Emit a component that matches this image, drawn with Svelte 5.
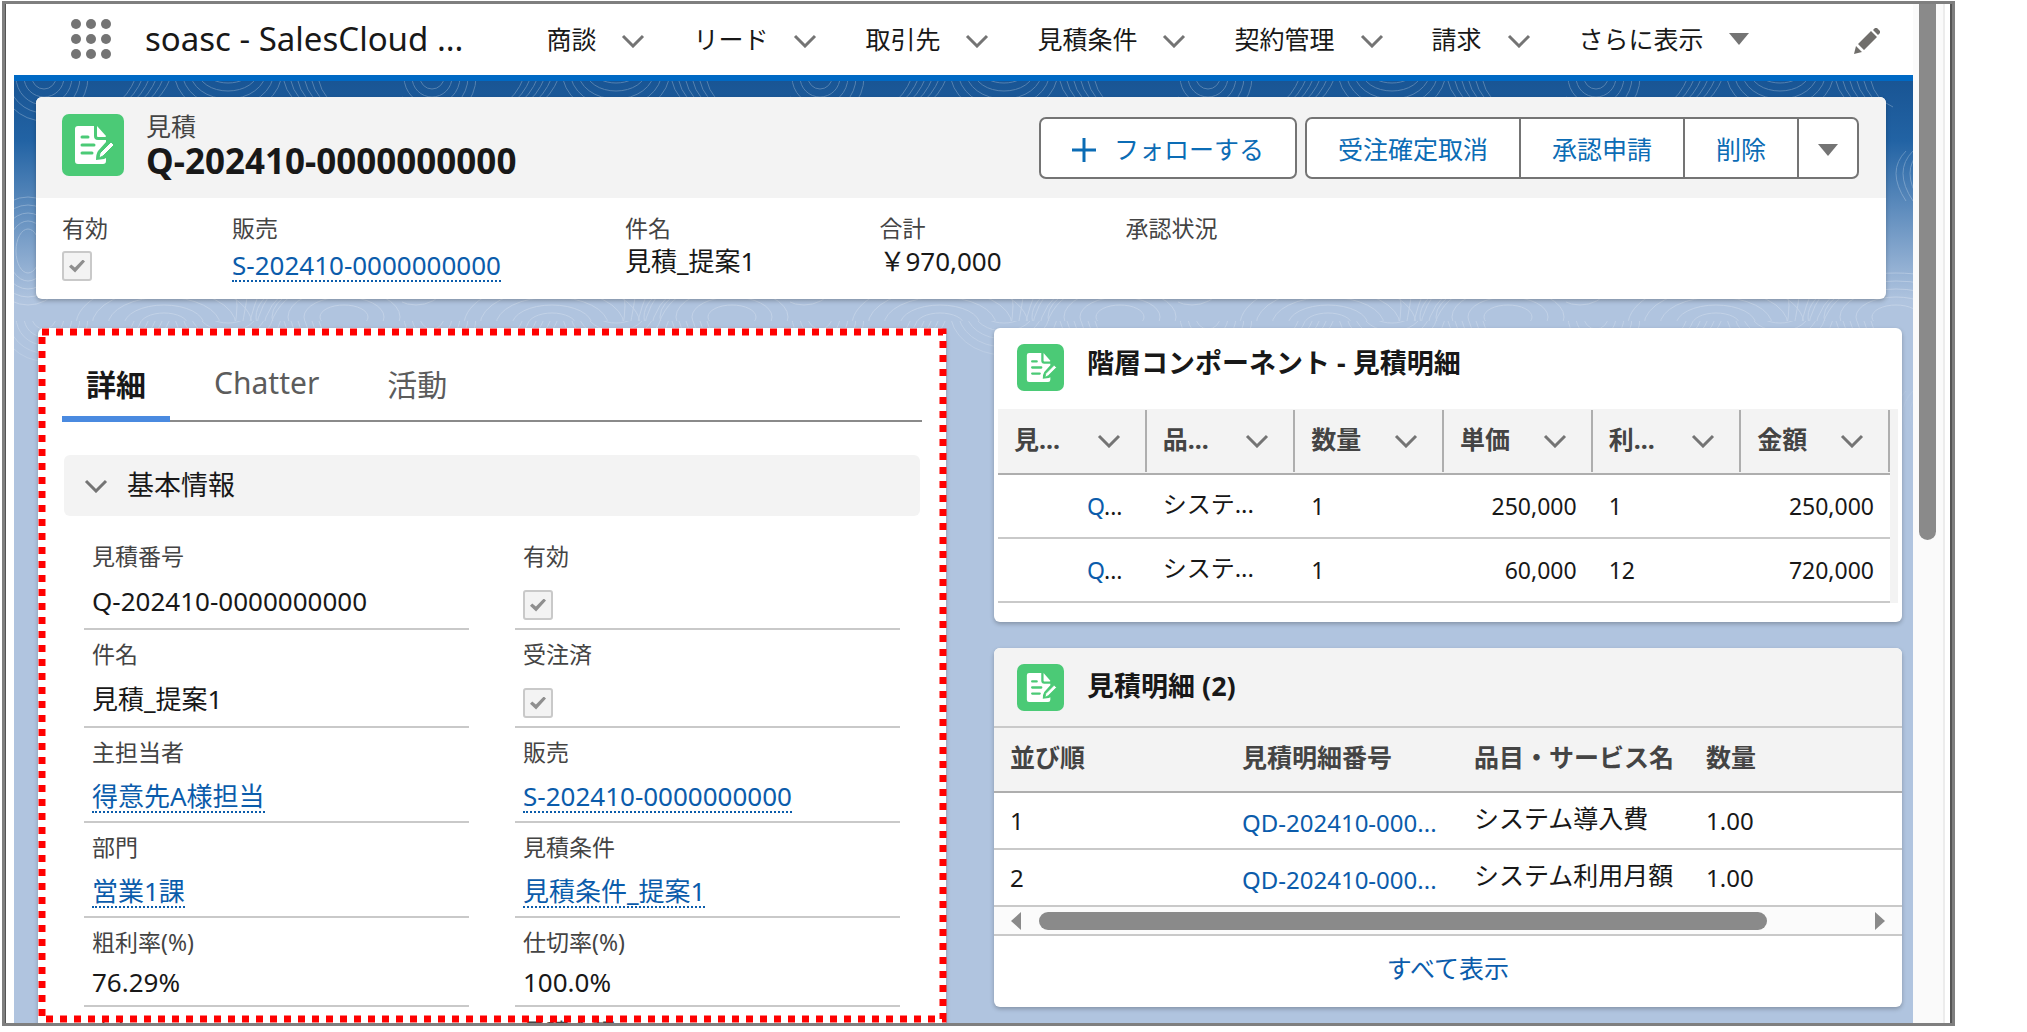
<script lang="ts">
	const navItems = ['商談', 'リード', '取引先', '見積条件', '契約管理', '請求'];
	const actions = ['受注確定取消', '承認申請', '削除'];
	const tabs = [
		{ label: '詳細', isActive: true },
		{ label: 'Chatter', isActive: false },
		{ label: '活動', isActive: false }
	];

	const highlights = [
		{ label: '有効', type: 'check' },
		{ label: '販売', type: 'link', value: 'S-202410-0000000000' },
		{ label: '件名', type: 'text', value: '見積_提案1' },
		{ label: '合計', type: 'text', value: '\uFFE5970,000' },
		{ label: '承認状況', type: 'text', value: '' }
	];

	const fields = [
		{ label: '見積番号', type: 'text', value: 'Q-202410-0000000000' },
		{ label: '有効', type: 'check' },
		{ label: '件名', type: 'text', value: '見積_提案1' },
		{ label: '受注済', type: 'check' },
		{ label: '主担当者', type: 'link', value: '得意先A様担当' },
		{ label: '販売', type: 'link', value: 'S-202410-0000000000' },
		{ label: '部門', type: 'link', value: '営業1課' },
		{ label: '見積条件', type: 'link', value: '見積条件_提案1' },
		{ label: '粗利率(%)', type: 'text', value: '76.29%' },
		{ label: '仕切率(%)', type: 'text', value: '100.0%' },
		{ label: '定価', type: 'text', value: '' },
		{ label: '見積金額', type: 'text', value: '' }
	];

	const treeColumns = ['見...', '品...', '数量', '単価', '利...', '金額'];
	const treeRows = [
		{ name: 'システ...', qty: '1', price: '250,000', months: '1', amount: '250,000' },
		{ name: 'システ...', qty: '1', price: '60,000', months: '12', amount: '720,000' }
	];

	const lineRows = [
		{ order: '1', no: 'QD-202410-000...', name: 'システム導入費', qty: '1.00' },
		{ order: '2', no: 'QD-202410-000...', name: 'システム利用月額', qty: '1.00' }
	];

	const rings = [12, 20, 28, 36, 44];
	const hatches = [0, 7, 14, 21, 28, 35];
</script>

{#snippet chevron()}
	<svg class="chevron" viewBox="0 0 24 14" aria-hidden="true">
		<path d="M2 2l10 10L22 2" fill="none" stroke="currentColor" stroke-width="3" />
	</svg>
{/snippet}

{#snippet caret()}
	<svg class="caret" viewBox="0 0 20 12" aria-hidden="true">
		<path d="M0 0h20L10 12z" fill="currentColor" />
	</svg>
{/snippet}

{#snippet quoteIcon()}
	<svg class="quote-icon" viewBox="0 0 62 62" aria-hidden="true">
		<path
			d="M16 12H32V22Q32 26 36 26H44V28L36 37Q34 40 34 46L42 45L44 44V47Q44 50 41 50H16Q13 50 13 47V15Q13 12 16 12Z"
			fill="#fff"
		/>
		<path d="M35 12L44 22Q44 23 43 23H36Q35 23 35 22Z" fill="#fff" />
		<path d="M20 23h6M20 31h12M20 39h10" stroke="#4bca76" stroke-width="3" stroke-linecap="round" />
		<path d="M37 44L38 39L49 28L52 31L41 42Z" fill="#fff" stroke="#4bca76" stroke-width="1" />
	</svg>
{/snippet}

{#snippet fieldValue(field, id)}
	{#if field.type === 'check'}
		<input {id} class="checkbox" type="checkbox" checked disabled />
	{:else if field.type === 'link'}
		<a {id} class="record-link" href="#record">{field.value}</a>
	{:else}
		<output {id}>{field.value}</output>
	{/if}
{/snippet}

<div class="window">
	<div class="page">
		<nav class="nav">
			<button class="launcher" aria-label="アプリケーションランチャー">
				{#each Array(9) as _}
					<i></i>
				{/each}
			</button>
			<span class="app-name">soasc - SalesCloud ...</span>
			<ul class="nav-list">
				{#each navItems as item}
					<li><a href="#nav">{item}</a>{@render chevron()}</li>
				{/each}
				<li><a href="#more">さらに表示</a>{@render caret()}</li>
			</ul>
			<button class="edit" aria-label="編集">
				<svg viewBox="0 0 26 26" aria-hidden="true">
					<path d="M0 26l2-8 6 6zM4 16L17 3l6 6L10 22zM19 2l2-2q1-1 2 0l3 3q1 1 0 2l-2 2z" fill="#706e6b" />
				</svg>
			</button>
		</nav>

		<main class="canvas">
			<svg class="contours" aria-hidden="true">
				<defs>
					<pattern id="contour" width="388" height="240" patternUnits="userSpaceOnUse">
						<g fill="none" stroke="#fff" stroke-width="1">
							{#each rings as r}
								<ellipse cx="30" cy="-4" rx={r} ry={r} />
								<ellipse cx="214" cy="-10" rx={r + 10} ry={r} />
								<ellipse cx="14" cy="170" rx={r} ry={r + 10} />
								<ellipse cx="330" cy="236" rx={r * 2} ry={r} />
								<ellipse cx="150" cy="244" rx={r * 2} ry={r} />
							{/each}
							{#each hatches as h}
								<path d="M{100 + h} 24q14-8 22-28" />
								<path d="M{270 + h} 0q4 18 22 26" />
								<path d="M{220 + h} 250q6-30 {h} -42" />
								<path d="M{340 + h} 70q-20 20 0 50" />
							{/each}
						</g>
					</pattern>
				</defs>
				<rect width="100%" height="100%" fill="url(#contour)" />
			</svg>

			<section class="card record">
				<header class="record-head">
					{@render quoteIcon()}
					<div class="record-title">
						<span class="label">見積</span>
						<h1>Q-202410-0000000000</h1>
					</div>
					<div class="actions">
						<button class="action">
							<svg class="plus" viewBox="0 0 24 24" aria-hidden="true">
								<path d="M12 0v24M0 12h24" stroke="currentColor" stroke-width="3" />
							</svg>
							フォローする
						</button>
						<div class="action-group">
							{#each actions as action}
								<button class="action">{action}</button>
							{/each}
							<button class="action more" aria-label="その他のアクション">{@render caret()}</button>
						</div>
					</div>
				</header>
				<div class="highlights">
					{#each highlights as field, i}
						<div class="highlight">
							<label class="label" for="highlight-{i}">{field.label}</label>
							{@render fieldValue(field, `highlight-${i}`)}
						</div>
					{/each}
				</div>
			</section>

			<div class="columns">
				<section class="card detail">
					<div class="tab-list" role="tablist">
						{#each tabs as tab}
							<button class="tab {tab.isActive ? 'active' : ''}" role="tab" aria-selected={tab.isActive}>
								{tab.label}
							</button>
						{/each}
					</div>
					<button class="section-head">{@render chevron()}<span>基本情報</span></button>
					<div class="fields">
						{#each fields as field, i}
							<div class="field field--{field.type}">
								<label class="label" for="field-{i}">{field.label}</label>
								<div class="field-value">{@render fieldValue(field, `field-${i}`)}</div>
							</div>
						{/each}
					</div>
				</section>

				<div class="side">
					<section class="card tree">
						<header class="card-head">
							{@render quoteIcon()}
							<h2>階層コンポーネント - 見積明細</h2>
						</header>
						<div class="tree-scroll">
							<table>
								<thead>
									<tr>
										{#each treeColumns as column}
											<th><div class="th-inner"><span>{column}</span>{@render chevron()}</div></th>
										{/each}
									</tr>
								</thead>
								<tbody>
									{#each treeRows as row}
										<tr>
											<td class="tree-no"><a href="#line">Q</a>...</td>
											<td class="name">{row.name}</td>
											<td>{row.qty}</td>
											<td class="num">{row.price}</td>
											<td>{row.months}</td>
											<td class="num">{row.amount}</td>
										</tr>
									{/each}
								</tbody>
							</table>
						</div>
					</section>

					<section class="card lines">
						<header class="card-head">
							{@render quoteIcon()}
							<h2>見積明細 (2)</h2>
						</header>
						<table>
							<thead>
								<tr>
									<th>並び順</th>
									<th>見積明細番号</th>
									<th>品目・サービス名</th>
									<th class="qty">数量</th>
								</tr>
							</thead>
							<tbody>
								{#each lineRows as row}
									<tr>
										<td>{row.order}</td>
										<td class="line-no"><a href="#line">{row.no}</a></td>
										<td class="name">{row.name}</td>
										<td>{row.qty}</td>
									</tr>
								{/each}
							</tbody>
						</table>
						<div class="h-scroll">
							<svg viewBox="0 0 10 18" aria-hidden="true"><path d="M10 0v18L0 9z" fill="#8a8a8a" /></svg>
							<div class="h-track"><div class="h-thumb"></div></div>
							<svg viewBox="0 0 10 18" aria-hidden="true"><path d="M0 0v18l10-9z" fill="#8a8a8a" /></svg>
						</div>
						<a class="view-all" href="#all">すべて表示</a>
					</section>
				</div>
			</div>
		</main>
	</div>
	<div class="v-track"><div class="v-thumb"></div></div>
</div>

<!-- dotted frame round the detail card -->
<div class="marker-layer">
	<svg class="marker" aria-hidden="true">
		<rect class="marker-rect" x="4" y="4" fill="none" stroke="#f00" stroke-width="7" stroke-dasharray="7" />
	</svg>
</div>

<style>
	:global(body) {
		background: #fff;
		overflow: hidden;
	}

	:global(#app) {
		position: relative;
		font-family: 'Noto Sans', 'Noto Sans CJK JP', sans-serif;
		color: #181818;
	}

	* {
		box-sizing: border-box;
	}

	button {
		font: inherit;
		color: inherit;
		background: none;
		border: 0;
		padding: 0;
		cursor: pointer;
	}

	a {
		color: #0b5cab;
		text-decoration: none;
	}

	h1,
	h2 {
		margin: 0;
	}

	svg {
		display: block;
		flex: none;
	}

	.window {
		display: flex;
		height: calc(100vh - 7px);
		margin: 1px 72px 0 2px;
		padding: 0 7px 0 9px;
		border: 3px solid #7f7f7f;
		box-shadow: inset 1px 0 0 #555, inset -2px 0 0 #555;
		overflow: hidden;
	}

	.page {
		flex: 1;
		min-width: 0;
	}

	.nav {
		display: flex;
		align-items: center;
		height: 77px;
		padding: 0 33px 2px 57px;
		border-bottom: 6px solid #0069c4;
	}

	.launcher {
		display: grid;
		grid-template-columns: repeat(3, 10px);
		gap: 5px;
		margin-right: 34px;
	}

	.launcher i {
		width: 10px;
		height: 10px;
		border-radius: 50%;
		background: #747474;
	}

	.app-name {
		font-size: 33px;
		line-height: 40px;
		white-space: nowrap;
	}

	.nav-list {
		display: flex;
		gap: 48px;
		list-style: none;
		margin: 0 0 0 83px;
		padding: 0;
	}

	.nav-list li {
		display: flex;
		align-items: center;
		gap: 25px;
		font-size: 25px;
		line-height: 36px;
		white-space: nowrap;
		color: #747474;
	}

	.nav-list a {
		color: #181818;
	}

	.chevron {
		width: 24px;
		height: 14px;
		color: #747474;
	}

	.nav-list .chevron {
		margin-top: 4px;
	}

	.caret {
		width: 20px;
		height: 12px;
		color: #747474;
	}

	.edit {
		margin-left: auto;
	}

	.edit svg {
		width: 26px;
		height: 26px;
		margin-top: 4px;
	}

	.canvas {
		position: relative;
		min-height: 100%;
		padding: 16px 11px 0 24px;
		background: linear-gradient(#195594 0, #2263a4 60px, #b0c4df 220px);
	}

	.contours {
		position: absolute;
		top: 0;
		left: 0;
		width: 100%;
		height: 360px;
		opacity: 0.25;
		mask-image: linear-gradient(#000 60%, transparent);
	}

	.card {
		position: relative;
		background: #fff;
		border-radius: 6px;
		box-shadow: 0 2px 4px rgba(0, 0, 0, 0.25);
		overflow: hidden;
	}

	.record {
		margin: 0 16px 0 -2px;
	}

	.record-head {
		display: flex;
		align-items: center;
		height: 101px;
		padding: 0 27px 0 26px;
		background: #f3f3f3;
	}

	.quote-icon {
		width: 62px;
		height: 62px;
		border-radius: 7px;
		background: #4bca76;
	}

	.record-head .quote-icon {
		margin-bottom: 6px;
	}

	.record-title {
		display: flex;
		flex-direction: column;
		margin: 0 0 4px 22px;
	}

	.record-title .label {
		font-size: 25px;
	}

	.label {
		font-size: 23px;
		line-height: 30px;
		color: #444;
		white-space: nowrap;
	}

	h1 {
		font-size: 35px;
		line-height: 40px;
	}

	.actions {
		display: flex;
		gap: 8px;
		margin-left: auto;
	}

	.action {
		display: flex;
		align-items: center;
		justify-content: center;
		gap: 18px;
		height: 62px;
		padding: 0 31px;
		border: 2px solid #747474;
		border-radius: 7px;
		background: #fff;
		color: #0b6cb5;
		font-size: 25px;
		white-space: nowrap;
	}

	.plus {
		width: 24px;
		height: 24px;
		margin-top: 4px;
	}

	.action-group {
		display: flex;
	}

	.action-group .action {
		border-radius: 0;
	}

	.action-group .action + .action {
		border-left: 0;
	}

	.action-group .action:first-child {
		border-radius: 7px 0 0 7px;
	}

	.action-group .action.more {
		padding: 4px 19px 0;
		border-radius: 0 7px 7px 0;
	}

	.highlights {
		display: flex;
		gap: 124px;
		height: 101px;
		padding: 15px 26px 0;
	}

	.highlight {
		display: flex;
		flex-direction: column;
		align-items: flex-start;
		font-size: 26px;
		line-height: 36px;
		white-space: nowrap;
	}

	.checkbox {
		appearance: none;
		display: grid;
		place-items: center;
		width: 30px;
		height: 30px;
		margin: 0;
		border: 2px solid #c9c9c9;
		border-radius: 3px;
		background: #f3f3f3;
	}

	.checkbox::before {
		content: '';
		width: 16px;
		height: 13px;
		background: #8f8f8f;
		clip-path: polygon(0 55%, 14% 38%, 37% 62%, 86% 0, 100% 16%, 38% 100%);
	}

	.highlight .checkbox {
		margin-top: 8px;
	}

	.record-link {
		line-height: 30px;
		border-bottom: 2px dotted #0b5cab;
	}

	.highlight .record-link {
		margin-top: 7px;
	}

	.columns {
		display: grid;
		grid-template-columns: 1fr 1fr;
		align-items: start;
		gap: 48px;
		margin-top: 29px;
	}

	.detail {
		min-height: 720px;
		padding: 21px 24px 0;
	}

	.tab-list {
		display: flex;
		gap: 20px;
		border-bottom: 2px solid #8a8a8a;
	}

	.tab {
		height: 73px;
		margin-bottom: -2px;
		padding: 0 24px;
		border-bottom: 6px solid transparent;
		color: #5c5c5c;
		font-size: 30px;
	}

	.tab.active {
		border-color: #4a8ae0;
		color: #181818;
		font-weight: bold;
	}

	.section-head {
		display: flex;
		align-items: center;
		gap: 19px;
		width: calc(100% - 4px);
		height: 61px;
		margin: 33px 2px 0;
		padding: 0 20px;
		border-radius: 6px;
		background: #f3f3f3;
		font-size: 27px;
	}

	.section-head span,
	.th-inner span {
		padding-bottom: 4px;
	}

	.fields {
		display: grid;
		grid-template-columns: 1fr 1fr;
		column-gap: 46px;
		margin: 16px 22px 0;
	}

	.field {
		display: flex;
		flex-direction: column;
		padding: 9px 8px 8px;
		border-bottom: 2px solid #c9c9c9;
	}

	.field-value {
		display: flex;
		flex: 1;
		align-items: center;
		margin-top: 10px;
		min-height: 30px;
		font-size: 26px;
		line-height: 30px;
	}

	/* links sit on the bottom of their row */
	.field--link .field-value {
		align-items: flex-end;
		min-height: 36px;
	}

	.field--check .field-value {
		align-items: flex-end;
		min-height: 39px;
	}

	.side {
		display: grid;
		gap: 26px;
	}

	.card-head {
		display: flex;
		align-items: center;
		gap: 23px;
		padding: 16px 23px;
	}

	.card-head .quote-icon {
		width: 47px;
		height: 47px;
	}

	h2 {
		margin-bottom: 4px;
		font-size: 27px;
		line-height: 36px;
	}

	table {
		width: 100%;
		table-layout: fixed;
		border-collapse: separate;
		border-spacing: 0;
	}

	th {
		padding: 0 16px;
		background: #f3f3f3;
		border-bottom: 2px solid #aeaeae;
		color: #444;
		font-size: 25px;
		line-height: 36px;
		text-align: left;
		white-space: nowrap;
	}

	td {
		padding: 0 16px;
		border-bottom: 2px solid #c9c9c9;
		font-size: 24px;
		line-height: 32px;
		white-space: nowrap;
	}

	.tree {
		padding-bottom: 19px;
	}

	.tree .card-head {
		padding-bottom: 18px;
	}

	.tree h2 {
		margin-bottom: 10px;
	}

	.tree-scroll {
		margin: 0 4px;
		padding-right: 8px;
		background: #f3f3f3;
	}

	.tree th {
		height: 66px;
		padding: 0;
	}

	.th-inner {
		display: flex;
		align-items: center;
		justify-content: space-between;
		height: 62px;
		padding: 0 24px 0 16px;
		border-right: 2px solid #aeaeae;
	}

	.tree td {
		height: 64px;
		background: #fff;
		font-size: 23px;
	}

	.tree td.name {
		padding-bottom: 4px;
		font-size: 24px;
	}

	.tree td.tree-no {
		padding-left: 89px;
		padding-right: 0;
	}

	td.num {
		text-align: right;
	}

	.lines .card-head {
		background: #f3f3f3;
		border-bottom: 2px solid #c9c9c9;
		padding-bottom: 15px;
	}

	.lines th {
		width: 232px;
		height: 65px;
		padding: 0 0 6px 16px;
	}

	.lines th.qty {
		width: auto;
	}

	.lines td {
		height: 57px;
		padding: 0 0 0 16px;
	}

	.lines td.line-no {
		padding-top: 4px;
	}

	.lines td.name {
		padding-bottom: 6px;
		font-size: 25px;
	}

	.h-scroll {
		display: flex;
		align-items: center;
		gap: 18px;
		height: 29px;
		padding: 0 17px;
		border-bottom: 2px solid #c9c9c9;
		background: #fbfbfb;
	}

	.h-scroll svg {
		width: 10px;
		height: 18px;
	}

	.h-track {
		flex: 1;
	}

	.h-thumb {
		width: 89%;
		height: 18px;
		border-radius: 9px;
		background: #8a8a8a;
	}

	.view-all {
		display: block;
		font-size: 25px;
		line-height: 36px;
		padding: 14px 0 21px;
		text-align: center;
	}

	.v-track {
		width: 32px;
		padding-left: 6px;
		border-right: 2px solid #ececec;
		background: #fafafa;
	}

	.v-thumb {
		width: 17px;
		height: 536px;
		border-radius: 0 0 9px 9px;
		background: #8a8a8a;
	}

	/* same column grid as .columns, laid over the window edge */
	.marker-layer {
		position: absolute;
		inset: 327px 125px 4px 38px;
		display: grid;
		grid-template-columns: 1fr 1fr;
		gap: 48px;
		pointer-events: none;
	}

	.marker {
		width: 100%;
		height: 100%;
		overflow: visible;
	}

	.marker-rect {
		width: calc(100% - 7px);
		height: calc(100% - 7px);
	}
</style>
